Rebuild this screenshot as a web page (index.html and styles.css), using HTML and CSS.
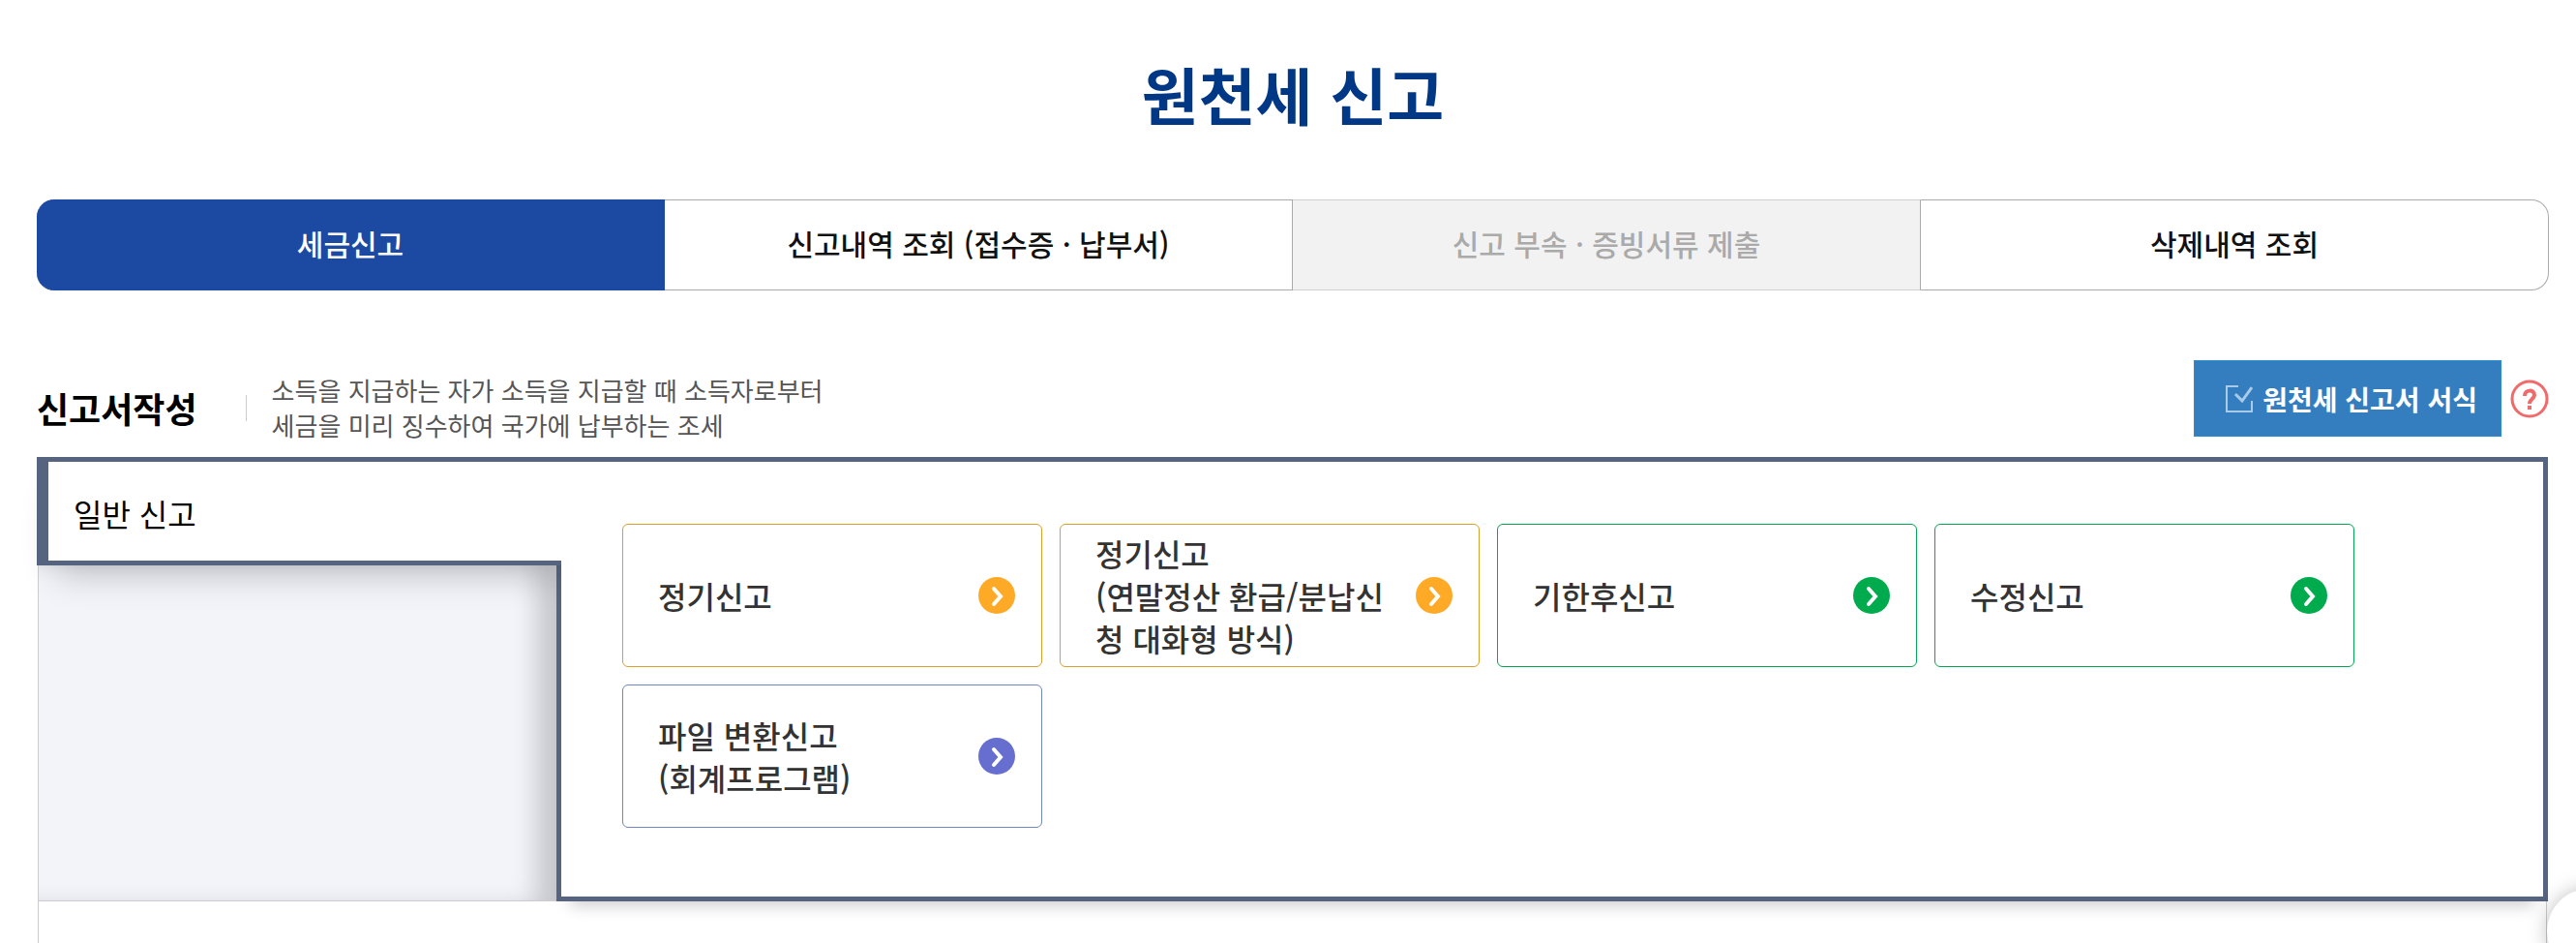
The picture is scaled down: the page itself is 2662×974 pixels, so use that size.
FILE: index.html
```html
<!DOCTYPE html>
<html lang="ko">
<head>
    <meta charset="UTF-8">
    <meta name="viewport" content="width=device-width, initial-scale=1.0">
    <title>원천세 신고</title>
    <link rel="stylesheet" href="styles.css">
</head>
<body>
    <main class="page">
        <h1>원천세 신고</h1>

        <nav class="tabs">
            <button type="button" class="tab active">세금신고</button>
            <button type="button" class="tab">신고내역 조회 (접수증 · 납부서)</button>
            <button type="button" class="tab" disabled>신고 부속 · 증빙서류 제출</button>
            <button type="button" class="tab">삭제내역 조회</button>
        </nav>

        <div class="section-head">
            <div class="section-title">
                <h2>신고서작성</h2>
                <p>소득을 지급하는 자가 소득을 지급할 때 소득자로부터<br>세금을 미리 징수하여 국가에 납부하는 조세</p>
            </div>
            <div class="section-tools">
                <button type="button" class="form-button">
                    <svg width="28" height="28" viewBox="0 0 28 28" fill="none" stroke="#a9cbe8" stroke-width="2">
                        <path d="M13 1H1v26h26V16"/>
                        <path d="M10 9l7 7L27 2" stroke-width="3"/>
                    </svg>
                    원천세 신고서 서식
                </button>
                <button type="button" class="help-button" aria-label="도움말">
                    <svg width="40" height="40" viewBox="0 0 40 40" fill="none" stroke="#f06a6a">
                        <circle cx="20" cy="20" r="18" stroke-width="3"/>
                        <path d="M15 17c0-7 10-7 10-1 0 4-5 4-5 9" stroke-width="4"/>
                        <path d="M20 27v4" stroke-width="4"/>
                    </svg>
                </button>
            </div>
        </div>

        <section class="panel">
            <div class="side">
                <a href="#general" class="side-tab">일반 신고</a>
                <div class="side-body"></div>
            </div>
            <div class="panel-body" id="general">
                <div class="cards">
                    <a href="#" class="card orange">
                        <span>정기신고</span>
                        <svg class="arrow" viewBox="0 0 38 38"><circle cx="19" cy="19" r="19"/><path d="M16 12l7 8-7 8"/></svg>
                    </a>
                    <a href="#" class="card orange">
                        <span>정기신고<br>(연말정산 환급/분납신청 대화형 방식)</span>
                        <svg class="arrow" viewBox="0 0 38 38"><circle cx="19" cy="19" r="19"/><path d="M16 12l7 8-7 8"/></svg>
                    </a>
                    <a href="#" class="card green">
                        <span>기한후신고</span>
                        <svg class="arrow" viewBox="0 0 38 38"><circle cx="19" cy="19" r="19"/><path d="M16 12l7 8-7 8"/></svg>
                    </a>
                    <a href="#" class="card green">
                        <span>수정신고</span>
                        <svg class="arrow" viewBox="0 0 38 38"><circle cx="19" cy="19" r="19"/><path d="M16 12l7 8-7 8"/></svg>
                    </a>
                    <a href="#" class="card purple">
                        <span>파일 변환신고<br>(회계프로그램)</span>
                        <svg class="arrow" viewBox="0 0 38 38"><circle cx="19" cy="19" r="19"/><path d="M16 12l7 8-7 8"/></svg>
                    </a>
                </div>
            </div>
        </section>
        <div class="panel-rest"></div>
    </main>

    <button type="button" class="quick-button" aria-label="퀵메뉴"></button>
</body>
</html>
```
FILE: styles.css
```css
* {
    box-sizing: border-box;
}

body {
    margin: 0;
    font-family: "Noto Sans CJK KR", "Noto Sans KR", sans-serif;
    color: #111;
    background: #fff;
    overflow: hidden;
}

button {
    font-family: inherit;
    cursor: pointer;
}

a {
    color: inherit;
    text-decoration: none;
}

.page {
    display: flex;
    flex-direction: column;
    min-height: 100vh;
    padding: 56px 28px 0 38px;
}

h1 {
    margin: 0 0 70px;
    font-size: 64px;
    line-height: 80px;
    font-weight: 700;
    text-align: center;
    color: #003885;
}

.tabs {
    display: grid;
    grid-template-columns: repeat(4, 1fr);
}

.tab {
    height: 94px;
    padding: 0 0 4px;
    border: 1px solid #aaa;
    border-left-width: 0;
    background: #fff;
    color: #111;
    font-size: 30px;
    font-weight: 500;
}

.tab.active {
    background: #1c4aa2;
    border-color: #1c4aa2;
    color: #fff;
}

.tab:disabled {
    background: #f2f2f2;
    border-color: #d0d0d0;
    border-right-color: #aaa;
    color: #aaa;
}

.tab:first-child {
    border-radius: 18px 0 0 18px;
}

.tab:last-child {
    border-radius: 0 18px 18px 0;
}

.section-head {
    display: flex;
    justify-content: space-between;
    align-items: flex-start;
    padding: 72px 0 15px;
}

.section-title {
    display: flex;
    align-items: center;
    padding-top: 13px;
}

h2 {
    margin: 0;
    font-size: 36px;
    font-weight: 700;
    color: #000;
}

.section-title p {
    display: flex;
    align-items: center;
    margin: 0;
    font-size: 26px;
    line-height: 36px;
    color: #555;
}

.section-title p::before {
    content: "";
    width: 1px;
    height: 27px;
    margin: 0 26px 0 50px;
    background: #ccc;
}

.section-tools {
    display: flex;
    align-items: center;
    gap: 9px;
}

.form-button {
    display: flex;
    align-items: center;
    gap: 10px;
    height: 79px;
    padding: 0 24px 0 32px;
    border: 1px solid #2d8bd0;
    background: #347dbf;
    color: #fff;
    font-size: 28px;
    font-weight: 700;
}

.help-button {
    width: 40px;
    height: 40px;
    padding: 0;
    border: 0;
    background: none;
}

.panel {
    display: flex;
    margin-right: 1px;
    border-top: 5px solid #566480;
}

.side {
    display: flex;
    flex-direction: column;
    width: 537px;
}

.side-tab {
    position: relative;
    z-index: 1;
    display: flex;
    align-items: center;
    height: 107px;
    margin-right: -5px;
    padding: 4px 0 0 26px;
    border-left: 12px solid #566480;
    border-bottom: 5px solid #566480;
    background: #fff;
    box-shadow: 10px 20px 36px -10px rgba(0, 0, 0, 0.2);
    clip-path: inset(0 0 -60px -40px);
    font-size: 32px;
    font-weight: 400;
    color: #000;
}

.side-body {
    flex: 1;
    margin-left: 1px;
    border-left: 1px solid #ccc;
    border-bottom: 1px solid #ccc;
    background: #f3f4fa;
    box-shadow: inset -28px 0 26px -8px rgba(0, 0, 0, 0.19);
}

.panel-body {
    flex: 1;
    padding: 64px 195px 71px 63px;
    border: 5px solid #566480;
    border-top: 0;
    box-shadow: 0 18px 16px -14px rgba(0, 0, 0, 0.2);
}

.cards {
    display: grid;
    grid-template-columns: repeat(4, 1fr);
    gap: 18px;
}

.card {
    display: flex;
    align-items: center;
    justify-content: space-between;
    gap: 16px;
    height: 148px;
    padding: 0 27px 0 36px;
    border: 1px solid;
    border-radius: 6px;
    font-size: 32px;
    line-height: 44px;
    font-weight: 500;
}

.card span {
    color: #333;
}

.orange {
    border-color: #d9a02b;
}

.green {
    border-color: #00a651;
}

.purple {
    border-color: #6f86c0;
}

.arrow {
    flex: none;
    width: 38px;
    height: 38px;
}

.orange .arrow {
    fill: #ffaa27;
}

.green .arrow {
    fill: #00ab4e;
}

.purple .arrow {
    fill: #666ed0;
}

.arrow path {
    fill: none;
    stroke: #fff;
    stroke-width: 4;
    stroke-linecap: round;
}

.panel-rest {
    flex: 1;
    margin: 0 2px 0 1px;
    border: 1px solid #ccc;
    border-width: 0 1px;
}

/* floating button in the bottom right corner */
.quick-button {
    position: fixed;
    right: -58px;
    bottom: -32px;
    width: 88px;
    height: 88px;
    border: 0;
    border-radius: 50%;
    background: #fff;
    box-shadow: 0 0 20px rgba(0, 0, 0, 0.25);
}
```
